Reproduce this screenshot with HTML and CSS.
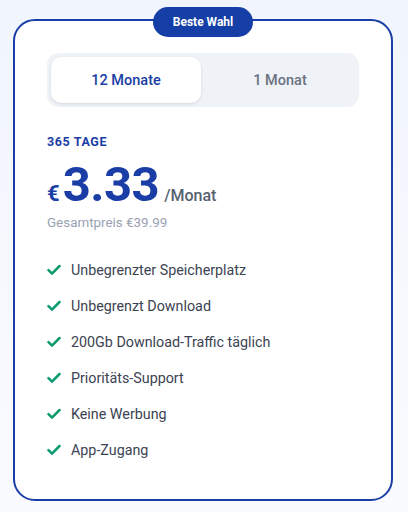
FILE: index.html
```html
<!DOCTYPE html>
<html lang="de">
<head>
<meta charset="utf-8">
<link rel="stylesheet" href="styles.css">
</head>
<body>
<div class="card">
  <div class="badge">Beste Wahl</div>
  <div class="toggle">
    <div class="tab active">12 Monate</div>
    <div class="tab">1 Monat</div>
  </div>
  <div class="period">365 TAGE</div>
  <div class="price">
    <span class="cur">€</span><span class="amount">3.33</span><span class="per">/Monat</span>
  </div>
  <div class="total">Gesamtpreis €39.99</div>
  <ul class="features">
    <li><svg class="check" viewBox="0 0 14 12"><path d="M1.5 6.2 L5 9.6 L12.5 2" /></svg>Unbegrenzter Speicherplatz</li>
    <li><svg class="check" viewBox="0 0 14 12"><path d="M1.5 6.2 L5 9.6 L12.5 2" /></svg>Unbegrenzt Download</li>
    <li><svg class="check" viewBox="0 0 14 12"><path d="M1.5 6.2 L5 9.6 L12.5 2" /></svg>200Gb Download-Traffic täglich</li>
    <li><svg class="check" viewBox="0 0 14 12"><path d="M1.5 6.2 L5 9.6 L12.5 2" /></svg>Prioritäts-Support</li>
    <li><svg class="check" viewBox="0 0 14 12"><path d="M1.5 6.2 L5 9.6 L12.5 2" /></svg>Keine Werbung</li>
    <li><svg class="check" viewBox="0 0 14 12"><path d="M1.5 6.2 L5 9.6 L12.5 2" /></svg>App-Zugang</li>
  </ul>
</div>
</body>
</html>
```

FILE: styles.css
```css
html, body {
  margin: 0;
  padding: 0;
}
body {
  width: 408px;
  height: 512px;
  background: linear-gradient(180deg, #f1f5fd 0%, #f9fbfe 100%);
  font-family: Roboto, "Liberation Sans", sans-serif;
  padding-top: 19px;
  padding-left: 13px;
  box-sizing: border-box;
  overflow: hidden;
}
.card {
  position: relative;
  box-sizing: border-box;
  width: 380px;
  height: 482px;
  background: #ffffff;
  border: 2px solid #1a3ea6;
  border-radius: 22px;
  padding: 32px 32px 0 32px;
}
.badge {
  position: absolute;
  top: -14px;
  left: 50%;
  transform: translateX(-50%);
  width: 100px;
  height: 30px;
  border-radius: 15px;
  background: #153ea6;
  color: #ffffff;
  font-size: 12px;
  font-weight: 700;
  display: flex;
  align-items: center;
  justify-content: center;
}
.toggle {
  display: flex;
  height: 54px;
  box-sizing: border-box;
  padding: 4px;
  background: #eff2f7;
  border-radius: 12px;
  gap: 4px;
}
.tab {
  flex: 1;
  display: flex;
  align-items: center;
  justify-content: center;
  border-radius: 10px;
  font-size: 14.5px;
  font-weight: 500;
  color: #6b7280;
}
.tab.active {
  background: #ffffff;
  color: #1a3ea6;
  box-shadow: 0 1px 3px rgba(15, 23, 42, 0.12);
}
.period {
  margin-top: 27px;
  font-size: 12.5px;
  font-weight: 700;
  letter-spacing: 0.6px;
  color: #1a3ea6;
  line-height: 15px;
}
.price {
  margin-top: 14px;
  display: flex;
  align-items: baseline;
  line-height: 44px;
  color: #1a3ea6;
}
.cur {
  font-size: 22px;
  font-weight: 700;
}
.amount {
  margin-left: 3px;
  font-size: 49px;
  font-weight: 700;
  letter-spacing: -0.5px;
}
.per {
  margin-left: 5px;
  font-size: 16px;
  font-weight: 500;
  color: #55606f;
}
.total {
  margin-top: -3px;
  font-size: 13.4px;
  color: #98a2b3;
  line-height: 16px;
}
.features {
  list-style: none;
  margin: 29px 0 0 0;
  padding: 0;
  display: flex;
  flex-direction: column;
  gap: 16px;
}
.features li {
  display: flex;
  align-items: center;
  gap: 10px;
  font-size: 14.3px;
  line-height: 20px;
  color: #3b4352;
}
.check {
  width: 14px;
  height: 12px;
  fill: none;
  stroke: #0b9a6d;
  stroke-width: 2.5;
  stroke-linecap: round;
  stroke-linejoin: round;
}
```
